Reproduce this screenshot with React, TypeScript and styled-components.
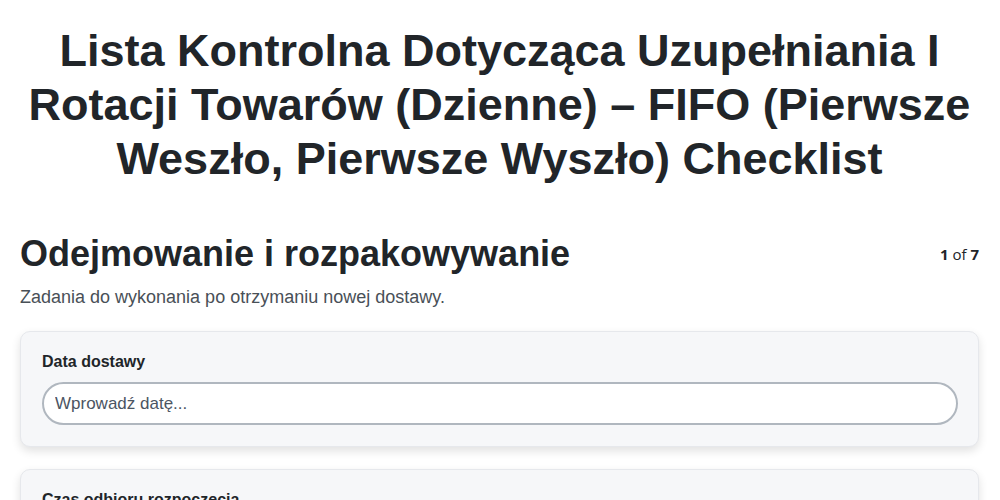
import React from "react";
import styled, { createGlobalStyle } from "styled-components";

const GlobalStyle = createGlobalStyle`
  body {
    margin: 0;
    background: #ffffff;
    font-family: "Liberation Sans", Arial, sans-serif;
    color: #212529;
  }
`;

const Page = styled.div`
  padding: 24px 21px 40px 20px;
`;

const Title = styled.h1`
  margin: 0 0 46px;
  text-align: center;
  font-size: 45px;
  line-height: 1.2;
  font-weight: 700;
  color: #212529;
`;

const SectionHeader = styled.div`
  display: flex;
  justify-content: space-between;
  align-items: center;
`;

const SectionTitle = styled.h2`
  margin: 0;
  font-size: 36px;
  line-height: 1.2;
  font-weight: 700;
  color: #212529;
`;

const Progress = styled.div`
  font-family: "Open Sans", "Liberation Sans", sans-serif;
  font-size: 15px;
  color: #212529;

  b {
    font-weight: 700;
  }
`;

const SectionDesc = styled.p`
  margin: 9px 0 20px;
  font-size: 18px;
  line-height: 1.5;
  color: #495057;
`;

const Cards = styled.div`
  display: flex;
  flex-direction: column;
  gap: 22px;
`;

const Card = styled.div`
  background: #f6f7f9;
  border: 1px solid #e6e8ec;
  border-radius: 10px;
  padding: 20px 20px 21px 21px;
  box-shadow: 0 4px 10px rgba(0, 0, 0, 0.12);
`;

const Label = styled.label`
  display: block;
  font-size: 16px;
  font-weight: 700;
  line-height: 19px;
  color: #212529;
  margin-bottom: 11px;
`;

const Input = styled.input`
  box-sizing: border-box;
  width: 100%;
  height: 43px;
  border: 2px solid #b0b7bf;
  border-radius: 22px;
  background: #ffffff;
  padding: 0 11px;
  font-family: "Liberation Sans", Arial, sans-serif;
  font-size: 17px;
  color: #212529;
  outline: none;

  &::placeholder {
    color: #4b5563;
  }
`;

const fields = [
  { label: "Data dostawy", placeholder: "Wprowadź datę..." },
  { label: "Czas odbioru rozpoczęcia", placeholder: "Wprowadź czas..." },
];

export default function App() {
  return (
    <>
      <GlobalStyle />
      <Page>
        <Title>
          Lista Kontrolna Dotycząca Uzupełniania I Rotacji Towarów (Dzienne) – FIFO (Pierwsze
          Weszło, Pierwsze Wyszło) Checklist
        </Title>
        <SectionHeader>
          <SectionTitle>Odejmowanie i rozpakowywanie</SectionTitle>
          <Progress>
            <b>1</b> of <b>7</b>
          </Progress>
        </SectionHeader>
        <SectionDesc>Zadania do wykonania po otrzymaniu nowej dostawy.</SectionDesc>
        <Cards>
          {fields.map((f) => (
            <Card key={f.label}>
              <Label>{f.label}</Label>
              <Input type="text" placeholder={f.placeholder} />
            </Card>
          ))}
        </Cards>
      </Page>
    </>
  );
}
